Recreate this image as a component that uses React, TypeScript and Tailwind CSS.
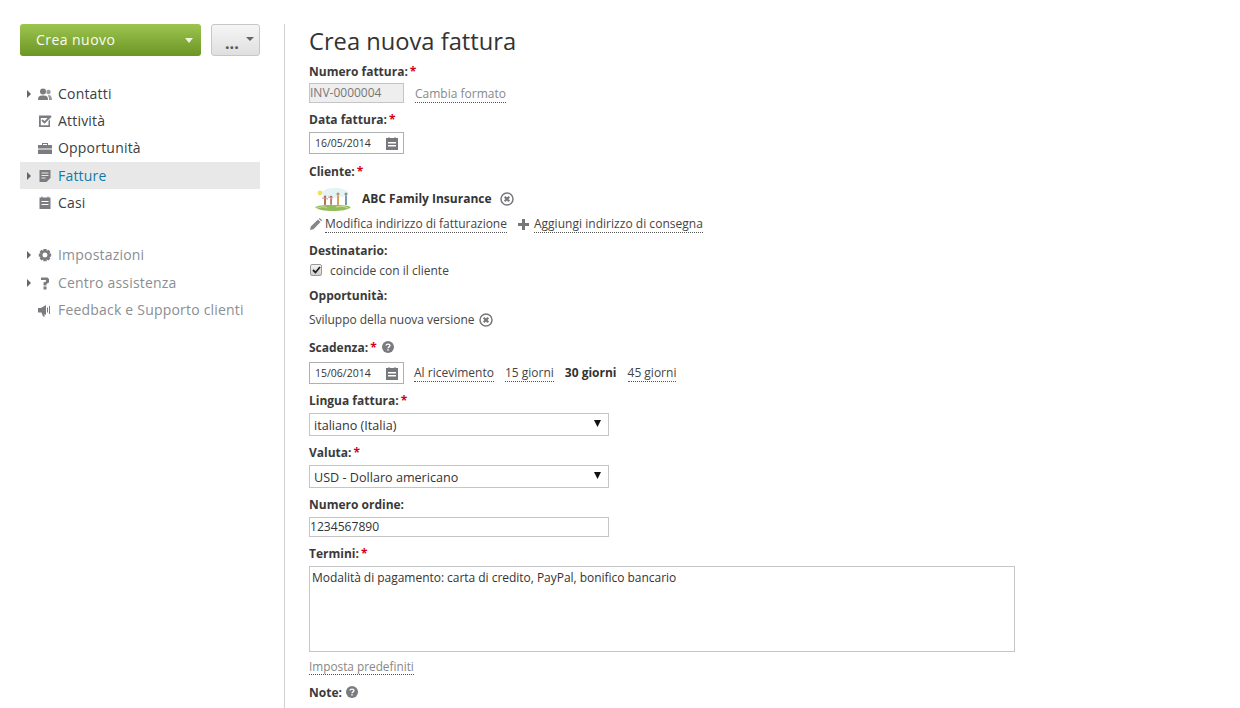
import React from "react";

const Arrow = () => (
  <svg width="4" height="8" viewBox="0 0 4 8" className="shrink-0"><path d="M0 0l4 4-4 4z" fill="#666" /></svg>
);

const I = ({ children }: { children: React.ReactNode }) => (
  <svg width="14" height="14" viewBox="0 0 14 14" className="shrink-0" fill="#7b7c80">{children}</svg>
);

const CalIcon = () => (
  <svg width="12" height="13" viewBox="0 0 12 13" className="shrink-0">
    <path fillRule="evenodd" fill="#77787b" d="M0 1h2.500V0h1v1h5V0h1v1H12v12H0zM2 5v1.500h8V5zM2 8v1.500h8V8z" />
  </svg>
);

const XCircle = () => (
  <svg width="14" height="14" viewBox="0 0 14 14" className="shrink-0">
    <circle cx="7" cy="7" r="6" fill="none" stroke="#77787b" strokeWidth="1.500" />
    <path d="M4.700 4.700l4.600 4.600M9.300 4.700l-4.600 4.600" stroke="#77787b" strokeWidth="2.200" />
  </svg>
);

const Help = () => (
  <svg width="12" height="12" viewBox="0 0 12 12" className="shrink-0">
    <circle cx="6" cy="6" r="6" fill="#7a7b7e" />
    <path d="M4 4.600c0-2 4-2 4 0 0 1.300-2 1.300-2 2.600" fill="none" stroke="#fff" strokeWidth="1.300" />
    <rect x="5.300" y="8.200" width="1.400" height="1.400" fill="#fff" />
  </svg>
);

const Req = () => <span className="text-[#d0021b] font-bold ml-[2px]">*</span>;

const Label = ({ children, className }: { children: React.ReactNode; className: string }) => (
  <div className={`flex items-center h-4 pt-[2px] text-[12px] font-bold text-[#3a3a3a] ${className}`}>{children}</div>
);

const Dotted = ({ children, gray }: { children: React.ReactNode; gray?: boolean }) => (
  <span className={`border-b border-dotted border-[#555] leading-[15px] ${gray ? "text-[#888]" : "text-[#444]"}`}>{children}</span>
);

const DateBox = ({ value }: { value: string }) => (
  <div className="w-[95px] h-[22px] border border-[#aeb0b2] flex items-center justify-between px-[5px] text-[10.5px] text-[#333] shrink-0">
    <span className="pt-[2px]">{value}</span>
    <CalIcon />
  </div>
);

const Select = ({ value, className }: { value: string; className: string }) => (
  <div className={`w-[300px] h-[23px] border border-[#c4c5c6] flex items-center justify-between pl-[4px] pr-[7px] text-[12.600px] text-[#333] ${className}`}>
    <span className="pt-[3px]">{value}</span>
    <svg width="7" height="7" viewBox="0 0 7 7" className="-mt-[2px]"><path d="M0 0h7L3.500 7z" fill="#111" /></svg>
  </div>
);

const Item = ({ icon, label, arrow, active, muted, className }: { icon: React.ReactNode; label: string; arrow?: boolean; active?: boolean; muted?: boolean; className?: string }) => (
  <div className={`flex items-center h-[27px] text-[14px] tracking-[0.2px] ${active ? "bg-[#e8e8e8] text-[#0f7ba8]" : muted ? "text-[#8b8e92]" : "text-[#3a3d42]"} ${className ?? ""}`}>
    <span className="w-[5px] ml-[7px] flex items-center">{arrow && <Arrow />}</span>
    <span className="ml-[6px] w-[20px] flex"><span className="flex">{icon}</span></span>
    <span>{label}</span>
  </div>
);

const Logo = () => (
  <svg width="38" height="26" viewBox="0 0 38 26">
    <ellipse cx="21" cy="7" rx="13" ry="5" fill="#e3f3f6" />
    <circle cx="6" cy="7" r="2.400" fill="#f2e05c" />
    <path d="M1 21c5-2 11-2 18-2s13 0 18 2c-3 3-10 4-18 4S4 24 1 21z" fill="#93bd5a" />
    <path d="M3 22c4-1 6-2 10 0M22 21c4-1 8-1 12 1" stroke="#c9de9c" fill="none" />
    <g fill="#b0705f">
      <circle cx="11" cy="11" r="1.400" /><rect x="10" y="12.400" width="2" height="6.500" />
      <circle cx="17" cy="11" r="1.300" /><rect x="16.200" y="12.300" width="1.700" height="6.500" />
    </g>
    <circle cx="24" cy="8" r="1.500" fill="#c58a6a" /><rect x="23" y="9.500" width="2" height="9.500" fill="#d9a45a" />
    <circle cx="32" cy="8" r="1.500" fill="#8a8f90" /><rect x="31" y="9.500" width="2" height="9.500" fill="#7a9aa8" />
    <path d="M8 12l6 1M14 11l5 1" stroke="#d98c8c" />
  </svg>
);

export default function App() {
  return (
    <div className="flex h-[708px] w-[1240px] overflow-hidden bg-white text-[#333]" style={{ fontFamily: '"Open Sans", sans-serif' }}>
      <aside className="w-[240px] ml-[20px] pt-[24px] shrink-0">
        <div className="flex gap-[10px]">
          <div className="w-[181px] h-[32px] rounded-[3px] bg-gradient-to-b from-[#9cc550] to-[#6c9623] flex items-center justify-between pl-[16px] pr-[8px] text-[14px] tracking-[0.45px] text-[#fbfdf2]">
            <span className="-mt-[2px]">Crea nuovo</span>
            <svg width="8" height="5" viewBox="0 0 8 5"><path d="M0 0h8L4 5z" fill="#eef5dc" /></svg>
          </div>
          <div className="w-[49px] h-[32px] rounded-[3px] border border-[#c6c7c8] bg-gradient-to-b from-[#f6f6f6] to-[#dfdfdf] flex items-center justify-between pl-[13px] pr-[5px] text-[16px] font-bold text-[#555]">
            <span className="leading-none mt-[5px]">...</span>
            <svg width="8" height="4" viewBox="0 0 8 4" className="mt-[-3px]"><path d="M0 0h8L4 4z" fill="#666" /></svg>
          </div>
        </div>
        <div className="mt-[24px]">
          <Item arrow label="Contatti" icon={<I><circle cx="5" cy="4.500" r="3" /><path d="M0 13c0-4 2-4.500 5-4.500s5 .5 5 4.500z" /><circle cx="10.500" cy="5" r="2.200" fill="#9a9b9e" /><path d="M11 13h3c0-3-1-5-3.500-5l-.5 1c1 1 1 2 1 4z" fill="#9a9b9e" /></I>} />
          <Item label="Attività" icon={<I><path fillRule="evenodd" d="M1 1.500h11v1.200l-1.300 1.300H2.800v7.200h7.700V7L12 5.500V13H1z" /><path d="M4 6l2.500 2.500L13 2" fill="none" stroke="#7b7c80" strokeWidth="1.800" /></I>} />
          <Item label="Opportunità" icon={<I><path fillRule="evenodd" d="M0 4h4V2h6v2h4v3.500H0zM5 3v1h4V3z" /><path d="M0 8.500h14V13H0z" /></I>} />
          <Item arrow active label="Fatture" className="mt-[1px]" icon={<I><path fillRule="evenodd" d="M1.500 1h11v8L8.500 13h-7zM3.500 3.500v1h7v-1zM3.500 6v1h7V6zM3.500 8.500v1h4v-1z" /></I>} />
          <Item label="Casi" icon={<I><path fillRule="evenodd" d="M1.500 1.500h2V.5h1v1h5v-1h1v1h2V13h-11zM3.500 5v1h7V5zM3.500 8v1h7V8z" /></I>} />
        </div>
        <div className="mt-[25px]">
          <Item muted arrow label="Impostazioni" icon={<I><path fillRule="evenodd" d="M5.500 1h3l.4 1.700 1.500-.9 2 2-.9 1.500 1.700.4v2.800l-1.700.4.9 1.500-2 2-1.500-.9-.4 1.700h-3l-.4-1.700-1.500.9-2-2 .9-1.500L.800 8.500V5.700l1.700-.4-.9-1.500 2-2 1.500.9zM7 4.500a2.500 2.500 0 100 5 2.500 2.500 0 000-5z" /></I>} />
          <Item muted arrow label="Centro assistenza" className="mt-[1px]" icon={<I><path d="M3 1.500h6.500L11 3v3.500L8.500 8v1.500h-3V6.500L8 5.500V4H3z" /><rect x="5.500" y="10.500" width="3" height="3" /></I>} />
          <Item muted label="Feedback e Supporto clienti" icon={<I><path d="M0 5h3l5-3v10L6 11l1 2.500H5L3.500 9.500H0z" /><path d="M9.500 4.500v5M11.500 3v8" stroke="#7b7c80" fill="none" /></I>} />
        </div>
      </aside>

      <div className="w-px h-[684px] mt-[24px] ml-[24px] bg-[#cfd0d1] shrink-0" />

      <main className="ml-[24px] flex-1 pt-[24px] text-[12px] text-[#444]">
        <h1 className="h-[32px] leading-[34px] text-[23.700px] text-[#333]">Crea nuova fattura</h1>
        <Label className="mt-[7px]">Numero fattura:<Req /></Label>
        <div className="mt-[4px] flex items-center h-[20px]">
          <div className="w-[95px] h-[20px] border border-[#c4c5c6] bg-[#eeeeee] flex items-center text-[#777] text-[12px]">INV-0000004</div>
          <span className="ml-[11px] pt-[1px]"><Dotted gray>Cambia formato</Dotted></span>
        </div>
        <Label className="mt-[8px]">Data fattura:<Req /></Label>
        <div className="mt-[5px]"><DateBox value="16/05/2014" /></div>
        <Label className="mt-[9px]">Cliente:<Req /></Label>
        <div className="mt-[7px] h-[26px] flex items-center">
          <span className="ml-[5px] flex"><Logo /></span>
          <span className="ml-[10px] font-bold text-[#333]">ABC Family Insurance</span>
          <span className="ml-[8px] flex"><XCircle /></span>
        </div>
        <div className="mt-[3px] h-[18px] flex items-center">
          <svg width="12" height="12" viewBox="0 0 12 12" className="ml-[1px]"><path d="M0 12l.8-3.500L8 1.500 10.500 4 3.500 11.200zM8.800.8l1-.8L12 2.200l-.8 1z" fill="#85868a" /></svg>
          <span className="ml-[3px] tracking-[-0.03px]"><Dotted>Modifica indirizzo di fatturazione</Dotted></span>
          <svg width="11" height="11" viewBox="0 0 11 11" className="ml-[11px]"><path d="M4 0h3v4h4v3H7v4H4V7H0V4h4z" fill="#77787b" /></svg>
          <span className="ml-[5px] tracking-[0.03px]"><Dotted>Aggiungi indirizzo di consegna</Dotted></span>
        </div>
        <Label className="mt-[9px]">Destinatario:</Label>
        <div className="mt-[4px] h-[16px] flex items-center">
          <span className="w-[12px] h-[12px] ml-[1px] rounded-[2px] border border-[#9a9a9a] bg-gradient-to-b from-[#f4f4f4] to-[#d0d0d0] flex items-center justify-center">
            <svg width="9" height="8" viewBox="0 0 9 8"><path d="M1 4l2.500 2.500L8 1" fill="none" stroke="#222" strokeWidth="1.800" /></svg>
          </span>
          <span className="ml-[8px] pt-[2px]">coincide con il cliente</span>
        </div>
        <Label className="mt-[9px]">Opportunità:</Label>
        <div className="mt-[9px] h-[16px] flex items-center">
          <span className="tracking-[-0.03px]">Sviluppo della nuova versione</span>
          <span className="ml-[5px] flex"><XCircle /></span>
        </div>
        <Label className="mt-[11px]">Scadenza:<Req /><span className="ml-[5px] flex -mt-[2px]"><Help /></span></Label>
        <div className="mt-[7px] flex items-center">
          <DateBox value="15/06/2014" />
          <span className="ml-[10px]"><Dotted>Al ricevimento</Dotted></span>
          <span className="ml-[11px]"><Dotted>15 giorni</Dotted></span>
          <span className="ml-[11px] font-bold text-[#333]">30 giorni</span>
          <span className="ml-[11px]"><Dotted>45 giorni</Dotted></span>
        </div>
        <Label className="mt-[8px]">Lingua fattura:<Req /></Label>
        <Select value="italiano (Italia)" className="mt-[5px]" />
        <Label className="mt-[8px]">Valuta:<Req /></Label>
        <Select value="USD - Dollaro americano" className="mt-[5px]" />
        <Label className="mt-[8px]">Numero ordine:</Label>
        <div className="mt-[5px] w-[300px] h-[20px] border border-[#c4c5c6] flex items-center text-[12.100px] text-[#333]">1234567890</div>
        <Label className="mt-[8px]">Termini:<Req /></Label>
        <div className="mt-[5px] w-[706px] h-[86px] border border-[#c4c5c6] pl-[2px] pt-[2px] text-[12px] tracking-[-0.03px] text-[#333]">Modalità di pagamento: carta di credito, PayPal, bonifico bancario</div>
        <div className="mt-[6px] h-[16px] text-[11.800px]"><Dotted gray>Imposta predefiniti</Dotted></div>
        <Label className="mt-[10px]">Note:<span className="ml-[4px] flex -mt-[2px]"><Help /></span></Label>
      </main>
    </div>
  );
}
